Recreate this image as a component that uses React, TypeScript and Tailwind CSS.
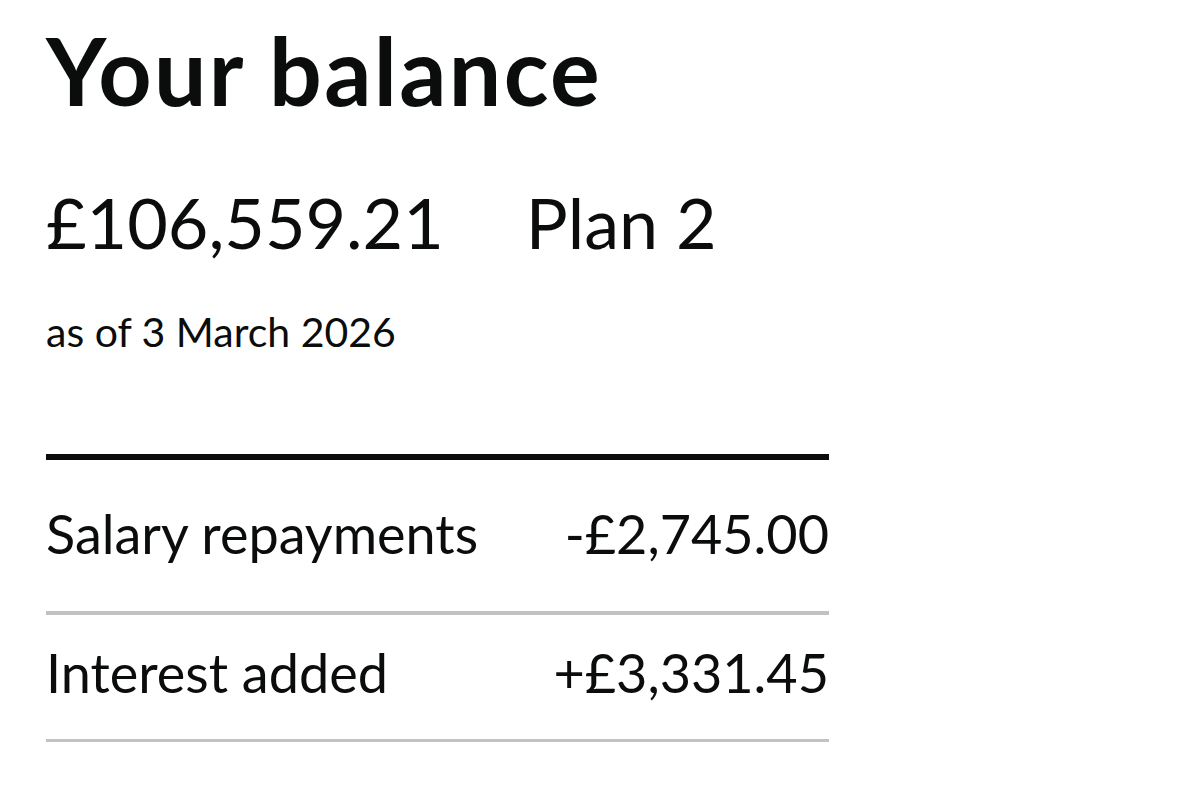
export default function App() {
  const rows = [
    { label: "Salary repayments", value: "-£2,745.00", pad: "pt-[47px] pb-[50px]", line: "h-[4px]" },
    { label: "Interest added", value: "+£3,331.45", pad: "pt-[31px] pb-[39px]", line: "h-[3px]" },
  ];

  return (
    <div
      className="min-h-screen bg-white text-[#0b0c0c] pl-[46px] pt-[24px]"
      style={{ fontFamily: "Lato, 'Liberation Sans', sans-serif" }}
    >
      <div className="w-[783px]">
        <h1 className="text-[93px] font-bold leading-none tracking-[2.4px]">Your balance</h1>

        <div className="mt-[70px] flex items-baseline gap-[82px] text-[70px] leading-none">
          <span>£106,559.21</span>
          <span>Plan 2</span>
        </div>

        <p className="mt-[54px] text-[41px] leading-none">as of 3 March 2026</p>

        <div className="mt-[102px] h-[6px] bg-[#0b0c0c]" />

        {rows.map((r) => (
          <div key={r.label}>
            <div className={`flex items-baseline justify-between text-[54px] leading-none ${r.pad}`}>
              <span>{r.label}</span>
              <span>{r.value}</span>
            </div>
            <div className={`${r.line} bg-[#c2c2c2]`} />
          </div>
        ))}
      </div>
    </div>
  );
}
